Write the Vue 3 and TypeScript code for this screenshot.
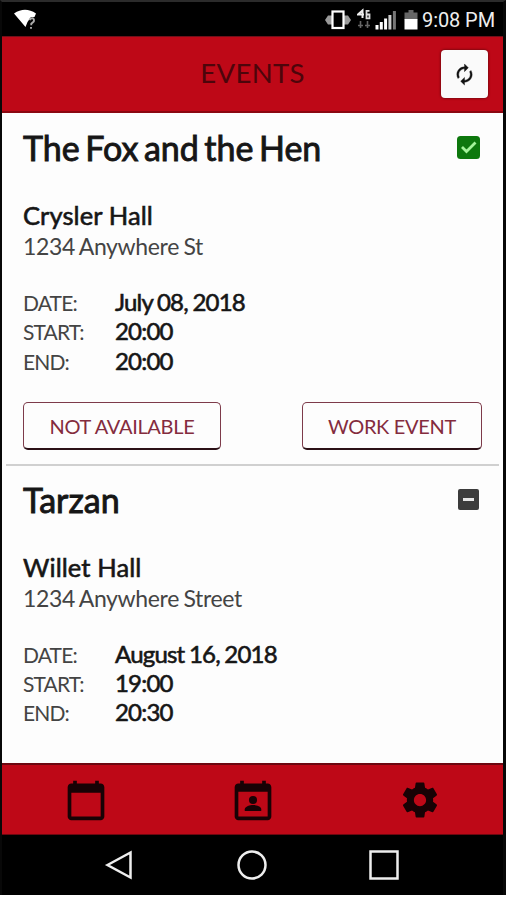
<script setup lang="ts">
interface EventItem {
  title: string
  venue: string
  address: string
  date: string
  start: string
  end: string
  confirmed: boolean
}

const events: EventItem[] = [
  {
    title: 'The Fox and the Hen',
    venue: 'Crysler Hall',
    address: '1234 Anywhere St',
    date: 'July 08, 2018',
    start: '20:00',
    end: '20:00',
    confirmed: true,
  },
  {
    title: 'Tarzan',
    venue: 'Willet Hall',
    address: '1234 Anywhere Street',
    date: 'August 16, 2018',
    start: '19:00',
    end: '20:30',
    confirmed: false,
  },
]
</script>

<template>
  <div class="phone">
    <div class="status">
      <svg class="wifi" width="26" height="24" viewBox="0 0 26 24">
        <path d="M1 5.500Q12 -2 23 5.500L21.500 9H18L14.500 14L12.500 19Z" fill="#fff" />
        <path d="M16.500 12q1-2 3-1.700t1.300 3.200l-2.500 2.200v1.500M18 19v1.800" fill="none" stroke="#aaa" stroke-width="1.900" />
      </svg>
      <div class="status-right">
        <svg class="vibrate" width="28" height="24" viewBox="0 0 28 24">
          <path d="M4 7.500h5v9H4l-3-4.500zM24 7.500h-5v9h5l3-4.500z" fill="#999" />
          <rect x="8.500" y="3.500" width="11" height="16.500" fill="#000" stroke="#fff" stroke-width="2.200" />
        </svg>
        <svg class="network" width="14" height="24" viewBox="0 0 14 24">
          <path d="M5.500 10V2.500L1 6.500h6" fill="none" stroke="#eee" stroke-width="2" />
          <path d="M12.500 2.800H9.500v7.500h3V6.500H10" fill="none" stroke="#ddd" stroke-width="1.800" />
          <path d="M3.500 13v7M1 17.500h5M10.500 13v7M8 17.500h5" stroke="#666" stroke-width="1.600" />
        </svg>
        <svg class="signal" width="22" height="24" viewBox="0 0 22 24">
          <path d="M2 17v4.500M6.300 14v7.500M10.600 10.500v11" stroke="#fff" stroke-width="3" />
          <path d="M14.900 7v14.500" stroke="#ccc" stroke-width="3" />
          <path d="M19.400 3v18.500" stroke="#777" stroke-width="3" />
        </svg>
        <svg class="battery" width="14" height="24" viewBox="0 0 14 24">
          <path d="M4.500 2h5v2.500H13.500v7H.5v-7h4z" fill="#666" />
          <path d="M.5 11h13v10.500H.5z" fill="#fff" />
        </svg>
        <span class="clock">9:08 PM</span>
      </div>
    </div>

    <header class="header">
      <h1 class="heading">EVENTS</h1>
      <button class="refresh" type="button" aria-label="Refresh">
        <svg width="23" height="23" viewBox="0 0 24 24">
          <path
            d="M12 6v3l4-4-4-4v3c-4.420 0-8 3.580-8 8 0 1.570.460 3.030 1.240 4.260L6.700 14.800c-.450-.830-.700-1.790-.700-2.800 0-3.310 2.690-6 6-6zm6.760 1.740L17.300 9.200c.440.840.700 1.790.700 2.800 0 3.310-2.690 6-6 6v-3l-4 4 4 4v-3c4.420 0 8-3.580 8-8 0-1.570-.460-3.030-1.240-4.260z"
            fill="#111"
            stroke="#111"
            stroke-width="0.400"
          />
        </svg>
      </button>
    </header>

    <main class="content">
      <section v-for="event in events" :key="event.title" class="event">
        <div class="title-row">
          <h2 class="title">{{ event.title }}</h2>
          <svg v-if="event.confirmed" class="mark" width="23" height="23" viewBox="0 0 23 23">
            <rect width="23" height="23" rx="3.500" fill="#0d780d" />
            <path d="M5 11l4.500 4.500L18.500 6.500" fill="none" stroke="#a4f39a" stroke-width="2.800" />
          </svg>
          <svg v-else class="mark" width="23" height="23" viewBox="0 0 23 23">
            <rect x="1" y="1" width="21" height="21" rx="2" fill="#3c3c3c" />
            <path d="M6 11.500h11" stroke="#e6e6e6" stroke-width="3" />
          </svg>
        </div>
        <div class="venue">{{ event.venue }}</div>
        <div class="address">{{ event.address }}</div>
        <dl class="times">
          <dt>DATE:</dt>
          <dd>{{ event.date }}</dd>
          <dt>START:</dt>
          <dd>{{ event.start }}</dd>
          <dt>END:</dt>
          <dd>{{ event.end }}</dd>
        </dl>
        <div v-if="event.confirmed" class="actions">
          <button class="action decline" type="button">NOT AVAILABLE</button>
          <button class="action work" type="button">WORK EVENT</button>
        </div>
      </section>
    </main>

    <nav class="tabs">
      <svg width="44" height="44" viewBox="0 0 24 24">
        <path d="M20 3h-1V1.500h-2V3H7V1.500H5V3H4c-1.100 0-2 .900-2 2v16c0 1.100.900 2 2 2h16c1.100 0 2-.900 2-2V5c0-1.100-.900-2-2-2zm0 18H4V8h16v13z" />
      </svg>
      <svg width="44" height="44" viewBox="0 0 24 24">
        <path d="M20 3h-1V1.500h-2V3H7V1.500H5V3H4c-1.100 0-2 .900-2 2v16c0 1.100.900 2 2 2h16c1.100 0 2-.900 2-2V5c0-1.100-.900-2-2-2zm0 18H4V7.500h16V21z" />
        <circle cx="12" cy="12" r="2.200" />
        <path d="M7.500 18v-1c0-1.500 3-2.300 4.500-2.300s4.500.800 4.500 2.300v1z" />
      </svg>
      <svg width="42" height="42" viewBox="0 0 24 24">
        <path
          d="M19.430 12.980c.040-.320.070-.640.070-.980s-.030-.660-.070-.980l2.110-1.650c.190-.150.240-.420.120-.640l-2-3.460c-.120-.220-.390-.300-.610-.220l-2.490 1c-.520-.400-1.080-.730-1.690-.980l-.380-2.650C14.460 2.180 14.250 2 14 2h-4c-.250 0-.460.180-.490.420l-.380 2.650c-.610.250-1.170.590-1.690.980l-2.490-1c-.230-.090-.490 0-.610.220l-2 3.460c-.130.220-.070.490.120.640l2.110 1.650c-.040.320-.070.650-.070.980s.030.660.070.980l-2.110 1.650c-.190.150-.240.420-.120.640l2 3.460c.120.220.390.300.610.220l2.490-1c.520.400 1.080.730 1.690.980l.380 2.650c.030.240.240.420.490.420h4c.250 0 .460-.180.490-.420l.380-2.650c.610-.250 1.170-.590 1.690-.980l2.490 1c.230.090.490 0 .610-.220l2-3.460c.120-.220.070-.490-.120-.640l-2.110-1.650zM12 15.500c-1.930 0-3.500-1.570-3.500-3.500s1.570-3.500 3.500-3.500 3.500 1.570 3.500 3.500-1.570 3.500-3.500 3.500z"
        />
      </svg>
    </nav>

    <div class="softkeys">
      <svg width="32" height="32" viewBox="0 0 32 32"><path d="M4.500 16L27.500 3.500v25z" /></svg>
      <svg width="32" height="32" viewBox="0 0 32 32"><circle cx="16" cy="16" r="13.500" /></svg>
      <svg width="32" height="32" viewBox="0 0 32 32"><rect x="2.500" y="2.500" width="27" height="27" /></svg>
    </div>
  </div>
</template>

<style>
body {
  margin: 0;
  background: #fff;
}
</style>

<style scoped>
.phone {
  box-sizing: border-box;
  width: 506px;
  height: 895px;
  display: flex;
  flex-direction: column;
  border-style: solid;
  border-width: 2px 3px 0 2px;
  border-color: #2b2b2b #080808 #080808;
  background: #fdfdfd;
  color: #161616;
  font-family: Lato, sans-serif;
}
.status {
  box-sizing: border-box;
  height: 34px;
  flex: none;
  display: flex;
  justify-content: space-between;
  padding: 6px 8px 0 11px;
  background: #000;
}
.status-right {
  display: flex;
}
.network {
  margin-left: 5px;
}
.signal {
  margin-left: 4px;
}
.battery {
  margin-left: 7px;
}
.clock {
  margin-left: 4px;
  font: 20px/24px Roboto, sans-serif;
  letter-spacing: -0.1px;
  color: #eee;
  white-space: nowrap;
}
.header {
  box-sizing: border-box;
  height: 77px;
  flex: none;
  display: grid;
  grid-template-columns: 1fr auto 1fr;
  align-items: center;
  padding: 0 15px;
  background: #be0817;
  border-top: 1px solid #70101a;
  border-bottom: 2px solid #8b0711;
}
.heading {
  grid-column: 2;
  margin: 0 0 3px;
  font-size: 27.500px;
  font-weight: 400;
  line-height: 34px;
  letter-spacing: 0.3px;
  color: #4d050b;
}
.refresh {
  justify-self: end;
  display: flex;
  align-items: center;
  justify-content: center;
  width: 47px;
  height: 48px;
  padding: 0;
  border: 0;
  border-radius: 4px;
  background: #fafafa;
  box-shadow: 0 0 2px 1px #850710;
}
.content {
  flex: 1;
  min-height: 0;
}
.event {
  box-sizing: border-box;
  height: 353px;
  margin: 0 4px;
  padding: 13px 17px 0;
}
.event:first-child {
  border-bottom: 2px solid #d0d0d0;
}
.event + .event {
  height: 297px;
  padding-top: 11.500px;
}
.title-row {
  display: flex;
  justify-content: space-between;
}
.title {
  margin: 0;
  font-size: 34px;
  font-weight: 400;
  line-height: 44px;
  word-spacing: -3.200px;
  -webkit-text-stroke: 0.9px #161616;
}
.mark {
  margin: 10px 2px 0 0;
}
.venue {
  margin-top: 30px;
  font-size: 25.500px;
  line-height: 30px;
  letter-spacing: 0.1px;
  -webkit-text-stroke: 0.6px #161616;
}
.address {
  font-size: 23px;
  line-height: 32px;
  letter-spacing: -0.350px;
  word-spacing: -1px;
  color: #444;
}
.times {
  display: grid;
  grid-template-columns: 92px 1fr;
  grid-auto-rows: 29.400px;
  margin: 25px 0 0;
  line-height: 29.400px;
}
dt {
  font-size: 21px;
  line-height: 31.400px;
  letter-spacing: -0.850px;
  color: #444;
}
dd {
  margin: 0;
  font-size: 24px;
  letter-spacing: -0.800px;
  word-spacing: -0.800px;
  -webkit-text-stroke: 0.6px #161616;
}
.actions {
  display: flex;
  justify-content: space-between;
  margin-top: 27px;
}
.action {
  box-sizing: border-box;
  height: 48px;
  padding: 0;
  border: 1.500px solid #7d3b4a;
  border-bottom: 2px solid #2c1117;
  border-radius: 5px;
  background: transparent;
  font: 20px/44px Lato, sans-serif;
  letter-spacing: -0.320px;
  color: #842c3e;
}
.decline {
  width: 198px;
}
.work {
  width: 180px;
}
.tabs {
  box-sizing: border-box;
  height: 72px;
  flex: none;
  display: grid;
  grid-template-columns: repeat(3, 1fr);
  place-items: center;
  padding-top: 1px;
  background: #be0817;
  border-top: 2px solid #6d0710;
  border-bottom: 1px solid #6d0710;
}
.tabs svg {
  fill: #180205;
}
.softkeys {
  height: 60px;
  flex: none;
  display: flex;
  align-items: center;
  justify-content: center;
  gap: 100.500px;
  padding-right: 2px;
  background: #000;
}
.softkeys svg {
  fill: none;
  stroke: #eee;
  stroke-width: 2.500px;
}
</style>
